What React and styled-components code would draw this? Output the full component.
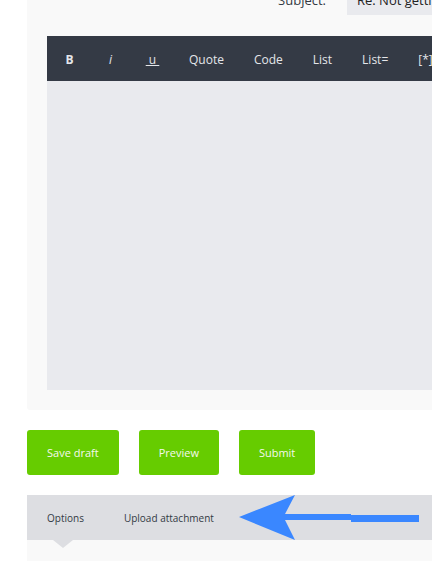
import React from "react";
import styled, { createGlobalStyle } from "styled-components";

const GlobalStyle = createGlobalStyle`
    html, body {
        margin: 0;
        padding: 0;
        background: #ffffff;
        overflow: hidden;
        font-family: "Open Sans", "Liberation Sans", sans-serif;
    }
`;

const toolbarItems = [
    { label: "B", bold: true, width: 41 },
    { label: "i", italic: true, width: 41 },
    { label: "\u00a0u\u00a0", underline: true, width: 43 },
    { label: "Quote" },
    { label: "Code" },
    { label: "List" },
    { label: "List=" },
    { label: "[*]" },
];

const App = () => {
    return (
        <>
            <GlobalStyle />
            <Page>
                <Panel>
                    <SubjectRow>
                        <SubjectLabel>Subject:</SubjectLabel>
                        <SubjectInput defaultValue="Re: Not getting emails from the forum" />
                    </SubjectRow>
                    <Toolbar>
                        {toolbarItems.map((item) => (
                            <ToolButton
                                key={item.label}
                                $bold={item.bold}
                                $italic={item.italic}
                                $underline={item.underline}
                                $width={item.width}
                            >
                                {item.label}
                            </ToolButton>
                        ))}
                    </Toolbar>
                    <Editor />
                </Panel>

                <Actions>
                    <GreenButton>Save draft</GreenButton>
                    <GreenButton>Preview</GreenButton>
                    <GreenButton>Submit</GreenButton>
                </Actions>

                <TabBar>
                    <Tab $active>Options</Tab>
                    <Tab>Upload attachment</Tab>
                    <Pointer width="180" height="45" viewBox="0 0 180 45">
                        <polygon
                            fill="#3a87ff"
                            points="0,22 56,0 46,19 112,19 112,20 180,20 180,27 112,27 112,25 46,25 56,45"
                        />
                    </Pointer>
                </TabBar>
                <TabContent />
            </Page>
        </>
    );
};

export default App;

const Page = styled.div`
    padding-left: 27px;
    width: 700px;
`;

const Panel = styled.div`
    margin-top: -35px;
    padding: 20px 0 20px 20px;
    background-color: #f9f9f9;
    border-radius: 3px;
`;

const SubjectRow = styled.div`
    display: flex;
    align-items: center;
    height: 30px;
    margin-bottom: 21px;
`;

const SubjectLabel = styled.label`
    width: 279px;
    margin-right: 21px;
    text-align: right;
    font-size: 13px;
    color: #333a44;
`;

const SubjectInput = styled.input`
    flex: 1;
    height: 30px;
    box-sizing: border-box;
    padding: 0 10px;
    border: none;
    background-color: #e9eaee;
    font-family: "Open Sans", "Liberation Sans", sans-serif;
    font-size: 13px;
    color: #222;
    outline: none;
`;

const Toolbar = styled.div`
    display: flex;
    align-items: center;
    height: 45px;
    box-sizing: border-box;
    padding: 2px 0 0 2px;
    background-color: #343a45;
`;

const ToolButton = styled.span`
    box-sizing: border-box;
    ${({ $width }) => ($width ? `width: ${$width}px; text-align: center;` : "padding: 0 15px;")}
    font-size: 12px;
    color: #e4e6ea;
    font-weight: ${({ $bold }) => ($bold ? 700 : 400)};
    font-style: ${({ $italic }) => ($italic ? "italic" : "normal")};
    text-decoration: ${({ $underline }) => ($underline ? "underline" : "none")};
    white-space: pre;
    cursor: pointer;
`;

const Editor = styled.div`
    height: 309px;
    background-color: #e9eaee;
`;

const Actions = styled.div`
    display: flex;
    gap: 20px;
    margin: 20px 0;
`;

const GreenButton = styled.button`
    height: 45px;
    padding: 0 20px;
    border: none;
    border-radius: 3px;
    background-color: #66cc00;
    color: #f4f8ee;
    font-family: "Open Sans", "Liberation Sans", sans-serif;
    font-size: 11px;
    cursor: pointer;
`;

const TabBar = styled.div`
    position: relative;
    display: flex;
    align-items: center;
    height: 45px;
    background-color: #dddee2;
`;

const Tab = styled.div`
    position: relative;
    height: 100%;
    display: flex;
    align-items: center;
    padding: 0 20px;
    font-size: 10px;
    color: #333a44;
    cursor: pointer;

    ${({ $active }) =>
        $active &&
        `
        &::after {
            content: "";
            position: absolute;
            left: 50%;
            top: 100%;
            margin-left: -12px;
            border-left: 10px solid transparent;
            border-right: 10px solid transparent;
            border-top: 8px solid #dddee2;
        }
    `}
`;

const Pointer = styled.svg`
    position: absolute;
    left: 212px;
    top: 0;
`;

const TabContent = styled.div`
    height: 40px;
    background-color: #f9f9f9;
`;
